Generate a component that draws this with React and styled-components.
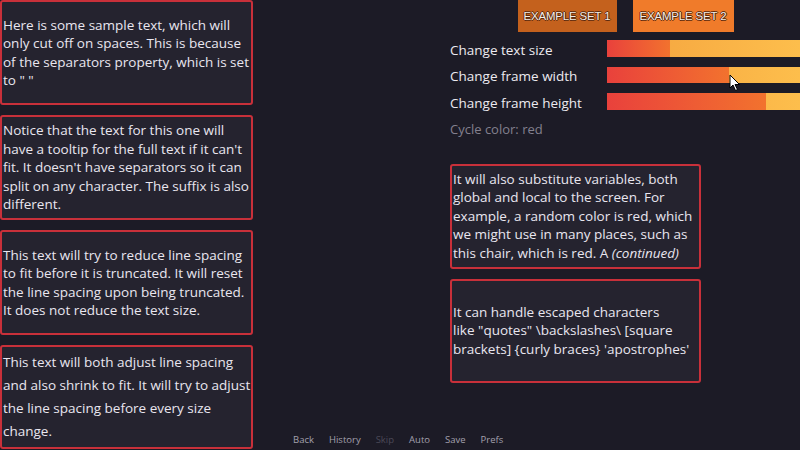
import React from "react";
import styled, { createGlobalStyle } from "styled-components";

const Global = createGlobalStyle`
  html, body { margin: 0; padding: 0; background: #1c1b26; }
  body { width: 800px; height: 450px; overflow: hidden; }
  * { box-sizing: border-box; }
`;

const FONT = `"Open Sans", "Noto Sans", sans-serif`;

const Screen = styled.div`
  position: relative;
  width: 800px;
  height: 450px;
  background: #1c1b26;
  display: grid;
  grid-template-columns: 253px 1fr 350px;
  font-family: ${FONT};
  color: #e9e6ef;
  overflow: hidden;
`;

const LeftColumn = styled.div`
  display: flex;
  flex-direction: column;
  gap: 10px;
`;

const TextFrame = styled.div`
  height: ${(p) => p.$h || 105}px;
  background: #25232f;
  border: 2px solid #c8303a;
  border-radius: 3px;
  padding: 0 1px;
  display: flex;
  flex-direction: column;
  justify-content: center;
  font-size: 13.5px;
  font-weight: 500;
  line-height: ${(p) => p.$lh || 18.4}px;
  white-space: nowrap;
  overflow: hidden;
`;

const Line = styled.span`
  display: block;
`;

const RightColumn = styled.div`
  display: flex;
  flex-direction: column;
`;

const ButtonRow = styled.div`
  display: flex;
  justify-content: center;
  gap: 16px;
  padding-left: 1px;
  height: 32px;
`;

const SetButton = styled.div`
  width: ${(p) => p.$w}px;
  height: 32px;
  background: ${(p) => (p.$active ? "#f07b2a" : "#c4611d")};
  display: flex;
  align-items: center;
  justify-content: center;
  font-family: "Liberation Sans", ${FONT};
  font-size: 11.4px;
  color: #f4eee8;
  letter-spacing: -0.1px;
  text-shadow: -1px 0 #5a2a10, 1px 0 #5a2a10, 0 -1px #5a2a10, 0 1px #5a2a10;
`;

const Sliders = styled.div`
  display: flex;
  flex-direction: column;
  gap: 10px;
  margin-top: 8px;
`;

const SliderRow = styled.div`
  display: flex;
  align-items: center;
  height: 16.5px;
`;

const SliderLabel = styled.div`
  width: 157px;
  font-size: 13.5px;
  font-weight: 500;
  color: #eceaf0;
  padding-top: 3px;
`;

const Bar = styled.div`
  flex: 1;
  height: 16.5px;
  background: linear-gradient(90deg, #f4a23e, #fdbe4c);
  position: relative;
  overflow: hidden;
`;

const Fill = styled.div`
  height: 100%;
  background: linear-gradient(90deg, #e9413c, #f2722e);
`;

const CycleLabel = styled.div`
  margin-top: 10px;
  font-size: 13px;
  color: #83808e;
`;

const RightFrames = styled.div`
  margin-top: 26px;
  width: 251px;
  display: flex;
  flex-direction: column;
  gap: 10px;
`;

const QuickMenu = styled.div`
  position: absolute;
  left: 293px;
  bottom: 4px;
  display: flex;
  gap: 15px;
  font-size: 9.5px;
`;

const QuickItem = styled.span`
  color: ${(p) => (p.$disabled ? "#4b4957" : "#a3a0ad")};
`;

const Cursor = styled.svg`
  position: absolute;
  left: 729px;
  top: 74px;
`;

const leftFrames = [
  {
    lines: [
      "Here is some sample text, which will",
      "only cut off on spaces. This is because",
      "of the separators property, which is set",
      'to " "',
    ],
  },
  {
    lines: [
      "Notice that the text for this one will",
      "have a tooltip for the full text if it can't",
      "fit. It doesn't have separators so it can",
      "split on any character. The suffix is also",
      "different.",
    ],
  },
  {
    lines: [
      "This text will try to reduce line spacing",
      "to fit before it is truncated. It will reset",
      "the line spacing upon being truncated.",
      "It does not reduce the text size.",
    ],
  },
  {
    lh: 23,
    h: 104,
    lines: [
      "This text will both adjust line spacing",
      "and also shrink to fit. It will try to adjust",
      "the line spacing before every size",
      "change.",
    ],
  },
];

const sliders = [
  { label: "Change text size", value: 63 },
  { label: "Change frame width", value: 122 },
  { label: "Change frame height", value: 159 },
];

export default function App() {
  return (
    <>
      <Global />
      <Screen>
        <LeftColumn>
          {leftFrames.map((f, i) => (
            <TextFrame key={i} $lh={f.lh} $h={f.h}>
              {f.lines.map((l, j) => (
                <Line key={j}>{l}</Line>
              ))}
            </TextFrame>
          ))}
        </LeftColumn>
        <div />
        <RightColumn>
          <ButtonRow>
            <SetButton $w={99}>EXAMPLE SET 1</SetButton>
            <SetButton $w={101} $active>
              EXAMPLE SET 2
            </SetButton>
          </ButtonRow>
          <Sliders>
            {sliders.map((s) => (
              <SliderRow key={s.label}>
                <SliderLabel>{s.label}</SliderLabel>
                <Bar>
                  <Fill style={{ width: `${s.value}px` }} />
                </Bar>
              </SliderRow>
            ))}
          </Sliders>
          <CycleLabel>Cycle color: red</CycleLabel>
          <RightFrames>
            <TextFrame>
              <Line>It will also substitute variables, both</Line>
              <Line>global and local to the screen. For</Line>
              <Line>example, a random color is red, which</Line>
              <Line>we might use in many places, such as</Line>
              <Line>
                this chair, which is red. A <i>(continued)</i>
              </Line>
            </TextFrame>
            <TextFrame $h={104}>
              <Line>It can handle escaped characters</Line>
              <Line>like "quotes" \backslashes\ [square</Line>
              <Line>brackets] {"{curly braces}"} 'apostrophes'</Line>
            </TextFrame>
          </RightFrames>
        </RightColumn>
        <QuickMenu>
          <QuickItem>Back</QuickItem>
          <QuickItem>History</QuickItem>
          <QuickItem $disabled>Skip</QuickItem>
          <QuickItem>Auto</QuickItem>
          <QuickItem>Save</QuickItem>
          <QuickItem>Prefs</QuickItem>
        </QuickMenu>
        <Cursor width="12" height="18" viewBox="0 0 12 18">
          <path d="M1 1 L1 14 L4 11 L6.5 16.5 L8.5 15.5 L6 10.5 L10.5 10.5 Z" fill="#fff" stroke="#000" strokeWidth="1" />
        </Cursor>
      </Screen>
    </>
  );
}
